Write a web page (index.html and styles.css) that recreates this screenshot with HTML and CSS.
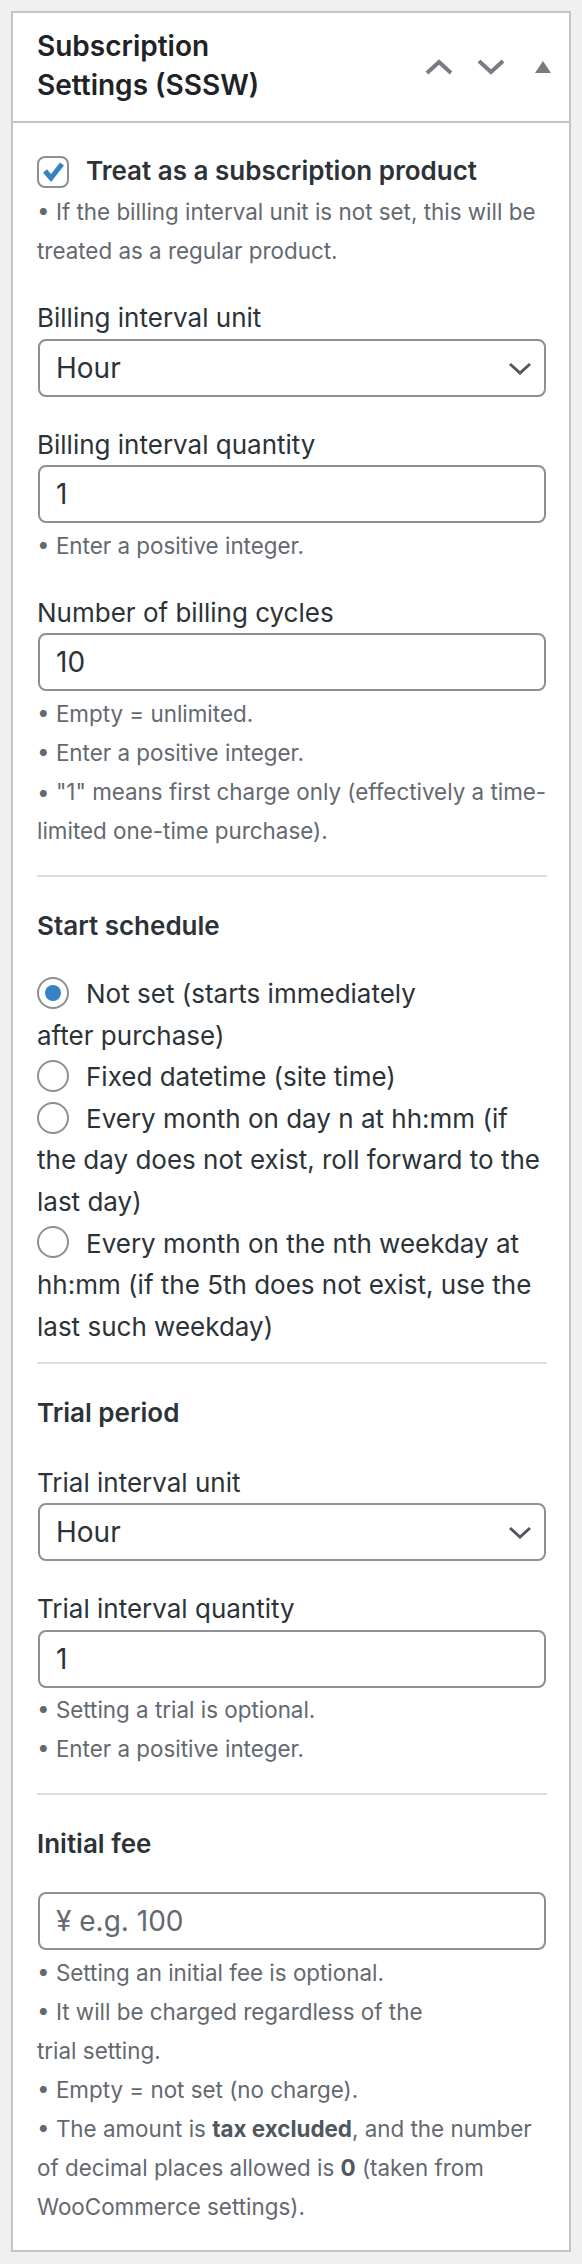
FILE: index.html
```html
<!DOCTYPE html>
<html lang="en">
<head>
  <meta charset="UTF-8">
  <meta name="viewport" content="width=device-width, initial-scale=1.0">
  <title>Subscription Settings</title>
  <link rel="stylesheet" href="styles.css">
</head>
<body>
  <div class="postbox">
    <div class="postbox-header">
      <h2>Subscription<br>Settings (SSSW)</h2>
      <div class="handle-actions">
        <span class="handle-btn">
          <svg width="28" height="18" viewBox="0 0 28 18"><polyline points="2,15 14,4 26,15" fill="none" stroke="#787c82" stroke-width="4"/></svg>
        </span>
        <span class="handle-btn">
          <svg width="28" height="18" viewBox="0 0 28 18"><polyline points="2,3 14,14 26,3" fill="none" stroke="#787c82" stroke-width="4"/></svg>
        </span>
        <span class="handle-btn">
          <svg width="16" height="14" viewBox="0 0 16 14"><polygon points="8,1 16,13 0,13" fill="#787c82"/></svg>
        </span>
      </div>
    </div>

    <div class="inside">
      <label class="check-row">
        <span class="checkbox">
          <svg width="28" height="28" viewBox="0 0 28 28"><polyline points="6,13 12,20 23,6" fill="none" stroke="#3582c4" stroke-width="5"/></svg>
        </span>
        Treat as a subscription product
      </label>
      <p class="desc">• If the billing interval unit is not set, this will be<br>treated as a regular product.</p>

      <div class="field">
        <label>Billing interval unit</label>
        <div class="select-wrap">
          <select><option>Hour</option></select>
          <svg class="select-arrow" width="24" height="14" viewBox="0 0 24 14"><polyline points="2,2 12,11 22,2" fill="none" stroke="#50575e" stroke-width="3"/></svg>
        </div>
      </div>

      <div class="field">
        <label>Billing interval quantity</label>
        <input type="text" value="1">
        <p class="desc">• Enter a positive integer.</p>
      </div>

      <div class="field">
        <label>Number of billing cycles</label>
        <input type="text" value="10">
        <p class="desc">• Empty = unlimited.</p>
        <p class="desc">• Enter a positive integer.</p>
        <p class="desc">• "1" means first charge only (effectively a time-<br>limited one-time purchase).</p>
      </div>

      <hr class="divider">

      <h3 class="section-title">Start schedule</h3>
      <ul class="radios">
        <li><span class="radio checked"></span>Not set (starts immediately<br>after purchase)</li>
        <li><span class="radio"></span>Fixed datetime (site time)</li>
        <li><span class="radio"></span>Every month on day n at hh:mm (if<br>the day does not exist, roll forward to the<br>last day)</li>
        <li><span class="radio"></span>Every month on the nth weekday at<br>hh:mm (if the 5th does not exist, use the<br>last such weekday)</li>
      </ul>

      <hr class="divider divider-tight">

      <h3 class="section-title">Trial period</h3>
      <div class="field">
        <label>Trial interval unit</label>
        <div class="select-wrap">
          <select><option>Hour</option></select>
          <svg class="select-arrow" width="24" height="14" viewBox="0 0 24 14"><polyline points="2,2 12,11 22,2" fill="none" stroke="#50575e" stroke-width="3"/></svg>
        </div>
      </div>

      <div class="field">
        <label>Trial interval quantity</label>
        <input type="text" value="1">
        <p class="desc">• Setting a trial is optional.</p>
        <p class="desc">• Enter a positive integer.</p>
      </div>

      <hr class="divider">

      <h3 class="section-title">Initial fee</h3>
      <input class="fee-input" type="text" placeholder="¥ e.g. 100">
      <p class="desc">• Setting an initial fee is optional.</p>
      <p class="desc">• It will be charged regardless of the<br>trial setting.</p>
      <p class="desc">• Empty = not set (no charge).</p>
      <p class="desc">• The amount is <strong>tax excluded</strong>, and the number<br>of decimal places allowed is <strong>0</strong> (taken from<br>WooCommerce settings).</p>
    </div>
  </div>
</body>
</html>
```

FILE: styles.css
```css
body {
  margin: 0;
  padding: 11px;
  background-color: #f0f0f1;
  font-family: Inter, "Noto Sans", sans-serif;
  color: #2c3338;
}

.postbox {
  background: #fff;
  border: 2px solid #c3c4c7;
}

/* Header */
.postbox-header {
  display: flex;
  align-items: center;
  border-bottom: 2px solid #c3c4c7;
}

.postbox-header h2 {
  flex: 1;
  margin: 0;
  padding: 14px 0 16px 24px;
  font-size: 28px;
  line-height: 39.2px;
  font-weight: 600;
  color: #1d2327;
}

.handle-actions {
  display: flex;
}

.handle-btn {
  width: 52px;
  height: 52px;
  display: flex;
  align-items: center;
  justify-content: center;
}

/* Body */
.inside {
  padding: 30px 22px 24px 24px;
}

.check-row {
  display: flex;
  align-items: center;
  font-size: 26px;
  line-height: 36.4px;
  font-weight: 600;
  color: #2c3338;
}

.checkbox {
  width: 28px;
  height: 28px;
  border: 2px solid #8c8f94;
  border-radius: 8px;
  margin-right: 17px;
  flex-shrink: 0;
}

.checkbox svg {
  display: block;
}

.desc {
  margin: 2.5px 0 0;
  font-size: 22.4px;
  line-height: 39px;
  color: #646970;
}

.desc + .desc {
  margin-top: 0;
}

.desc strong {
  font-weight: 700;
  color: #50575e;
}

.field {
  margin-top: 30px;
}

.section-title + .field {
  margin-top: 33px;
}

.field label {
  display: block;
  font-size: 26px;
  line-height: 36.4px;
  color: #2c3338;
  margin-bottom: 2px;
}

.select-wrap {
  position: relative;
}

select,
input[type="text"] {
  display: block;
  box-sizing: border-box;
  width: calc(100% - 2px);
  height: 58px;
  margin: 0 1px;
  padding: 0 16px;
  border: 2px solid #8c8f94;
  border-radius: 8px;
  background: #fff;
  font-family: Inter, "Noto Sans", sans-serif;
  font-size: 28px;
  color: #2c3338;
  appearance: none;
  -webkit-appearance: none;
  outline: none;
}

input::placeholder {
  color: #646970;
}

.select-arrow {
  position: absolute;
  right: 15px;
  top: 23px;
  pointer-events: none;
}

input.fee-input {
  margin-top: 30px;
}

.divider {
  border: 0;
  border-top: 2px solid #dcdcde;
  margin: 25px 0 31px;
}

.divider-tight {
  margin-top: 15px;
}

.section-title {
  margin: 0;
  font-size: 26px;
  line-height: 36.4px;
  font-weight: 600;
  color: #2c3338;
}

.radios {
  list-style: none;
  margin: 29px 0 0;
  padding: 0;
}

.radios li {
  font-size: 26px;
  line-height: 41.6px;
  color: #2c3338;
}

.radio {
  display: inline-block;
  box-sizing: border-box;
  width: 32px;
  height: 32px;
  border: 2px solid #8c8f94;
  border-radius: 50%;
  margin-right: 17px;
  vertical-align: middle;
  position: relative;
  top: -3px;
}

.radio.checked::after {
  content: "";
  position: absolute;
  left: 6px;
  top: 6px;
  width: 16px;
  height: 16px;
  border-radius: 50%;
  background: #3582c4;
}
```
